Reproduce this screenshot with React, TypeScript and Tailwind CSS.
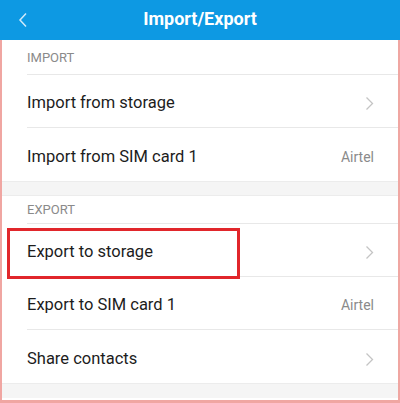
import React from 'react';

const Chevron = () => (
  <svg width="9" height="15" viewBox="0 0 9 15" fill="none" aria-hidden="true">
    <path d="M1.5 1.5L7.5 7.5L1.5 13.5" stroke="#c4c4c4" strokeWidth="1.3" />
  </svg>
);

type RowProps = { label: string; right?: string; last?: boolean };

const Row: React.FC<RowProps> = ({ label, right, last }) => (
  <div className="pl-[25px] h-[53px]">
    <div className={`h-full flex items-center justify-between pr-[24px] pt-[5px] ${last ? '' : 'border-b border-[#e8e8e8]'}`}>
      <span className="text-[16.5px] text-[#1c1c1c]">{label}</span>
      {right ? <span className="text-[14px] text-[#8a8a8a]">{right}</span> : <Chevron />}
    </div>
  </div>
);

const SectionTitle: React.FC<{ title: string; h: string }> = ({ title, h }) => (
  <div className="pl-[25px]">
    <div className={`${h} flex items-center border-b border-[#e8e8e8] text-[13px] text-[#8a8a8a]`}>{title}</div>
  </div>
);

export default function App() {
  return (
    <div className="w-[400px] h-[403px] bg-white overflow-hidden" style={{ fontFamily: 'Roboto, "Noto Sans", sans-serif' }}>
      <header className="h-[40px] bg-[#0d99e3] flex items-center relative">
        <svg className="absolute left-[18px] top-[12px]" width="10" height="16" viewBox="0 0 10 16" fill="none" aria-hidden="true">
          <path d="M8 1.5L2 8L8 14.5" stroke="#cfeafa" strokeWidth="1.5" />
        </svg>
        <h1 className="w-full text-center text-white font-bold text-[18px] -mt-[3px]">Import/Export</h1>
      </header>
      <div className="h-[363px] border-l-2 border-r-2 border-b-[3px] border-[#f0a6a2]">
        <SectionTitle title="IMPORT" h="h-[35px] pt-[2px]" />
        <Row label="Import from storage" />
        <Row label="Import from SIM card 1" right="Airtel" last />
        <div className="h-[15px] bg-[#f5f5f5] border-y border-[#ececec]" />
        <SectionTitle title="EXPORT" h="h-[28px]" />
        <div className="relative">
          <Row label="Export to storage" />
          <div className="absolute left-[5px] top-[4px] w-[233px] h-[51px] border-[3px] border-[#e1262b]" />
        </div>
        <Row label="Export to SIM card 1" right="Airtel" />
        <Row label="Share contacts" last />
        <div className="h-[15px] bg-[#f5f5f5] border-t border-[#ececec]" />
      </div>
    </div>
  );
}
